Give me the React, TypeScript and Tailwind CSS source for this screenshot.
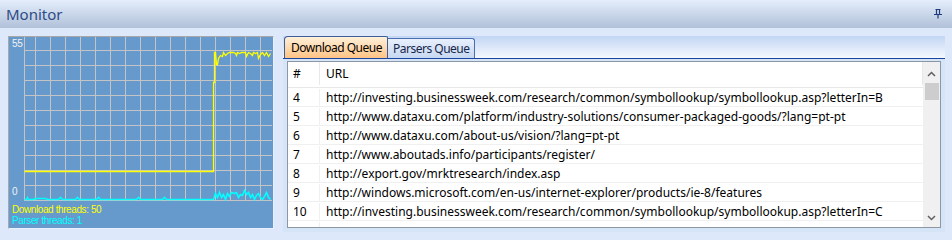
const rows: [string, string][] = [
  ["4", "http://investing.businessweek.com/research/common/symbollookup/symbollookup.asp?letterIn=B"],
  ["5", "http://www.dataxu.com/platform/industry-solutions/consumer-packaged-goods/?lang=pt-pt"],
  ["6", "http://www.dataxu.com/about-us/vision/?lang=pt-pt"],
  ["7", "http://www.aboutads.info/participants/register/"],
  ["8", "http://export.gov/mrktresearch/index.asp"],
  ["9", "http://windows.microsoft.com/en-us/internet-explorer/products/ie-8/features"],
  ["10", "http://investing.businessweek.com/research/common/symbollookup/symbollookup.asp?letterIn=C"],
  ["11", ""],
];

// chart points in page coords, shifted into the svg box (origin 24,37)
const yellowPts = [
  [24, 171], [213, 171], [213, 82], [214, 82], [214, 52], [215, 52], [216, 64], [217, 64],
  [218, 58], [220, 55], [222, 56], [223, 52], [225, 55], [227, 53], [229, 52], [233, 52],
  [235, 53], [236, 55], [237, 52], [239, 53], [241, 52], [245, 52], [246, 56], [248, 52],
  [250, 53], [252, 55], [253, 52], [255, 53], [257, 52], [258, 58], [260, 54], [262, 52],
  [264, 55], [266, 52], [268, 56], [270, 53],
];

const cyanPts = [
  [24, 199], [26, 199], [27, 197], [28, 199], [33, 199], [35, 198], [45, 198], [47, 199],
  [58, 199], [60, 197], [62, 199], [75, 199], [77, 197], [79, 199], [96, 199], [98, 197],
  [100, 199], [136, 199], [138, 197], [140, 199], [162, 199], [164, 197], [166, 199],
  [213, 199], [215, 193], [217, 197], [219, 192], [221, 197], [223, 194], [225, 199],
  [227, 193], [229, 196], [231, 192], [234, 193], [236, 192], [238, 197], [240, 194],
  [242, 195], [244, 190], [246, 194], [248, 192], [250, 197], [252, 194], [254, 199],
  [256, 195], [258, 193], [260, 197], [262, 199], [264, 196], [266, 192], [268, 197], [270, 199],
];

const toPath = (pts: number[][]) =>
  pts.map(([x, y]) => `${x - 24 + 0.5},${y - 37 + 0.5}`).join(" ");

function Chart() {
  const vLines = [0, ...Array.from({ length: 16 }, (_, i) => 11 + i * 15)];
  const hLines = Array.from({ length: 11 }, (_, i) => 13 + i * 15);
  return (
    <svg width="248" height="164" className="block">
      {vLines.map((x) => (
        <line key={"v" + x} x1={x + 0.5} y1={0} x2={x + 0.5} y2={164} stroke="#c4c4c4" strokeWidth="1" />
      ))}
      {hLines.map((y) => (
        <line key={"h" + y} x1={0} y1={y + 0.5} x2={248} y2={y + 0.5} stroke="#c4c4c4" strokeWidth="1" />
      ))}
      <polyline points={toPath(yellowPts)} fill="none" stroke="#ffff00" strokeWidth="1.3" />
      <polyline points={toPath(cyanPts)} fill="none" stroke="#00ffff" strokeWidth="1.6" />
    </svg>
  );
}

function PinIcon() {
  return (
    <svg width="10" height="10" viewBox="0 0 10 10" className="block">
      <path d="M2.5 0.5 H7.5 M3.5 0.5 V5.5 M6.5 0.5 V5.5 M1 5.5 H9 M5 5.5 V9.5" stroke="#1f3c7a" strokeWidth="1.2" fill="none" />
    </svg>
  );
}

function Chevron({ up }: { up?: boolean }) {
  return (
    <svg width="9" height="6" viewBox="0 0 9 6" className="block">
      <path d={up ? "M1 5 L4.5 1.5 L8 5" : "M1 1 L4.5 4.5 L8 1"} stroke="#606060" strokeWidth="1.5" fill="none" />
    </svg>
  );
}

export default function App() {
  return (
    <div className="flex h-[240px] w-[952px] flex-col overflow-hidden bg-[#dde8fa] font-['Noto_Sans',sans-serif]">
      <div className="flex h-[28px] items-center justify-between bg-gradient-to-b from-[#e4eefc] to-[#b1c1d8] pl-[6px] pr-[9px]">
        <span className="text-[15px] leading-none text-[#2d4c85]">Monitor</span>
        <PinIcon />
      </div>

      <div className="flex gap-[9px] pl-[8px] pt-[8px]">
        <div className="flex h-[193px] w-[266px] flex-col border-l border-t border-[#a8a8a8] border-r-[#e9f0fb] border-b-[#e9f0fb] border-r border-b bg-[#6699cc] font-['Liberation_Sans',sans-serif] text-[10px] tracking-[-0.4px]">
          <div className="flex">
            <div className="flex w-[15px] flex-col justify-between pb-[4px] pl-[3px] pt-[1px] leading-[11px] text-[#f2f2f2]">
              <span>55</span>
              <span>0</span>
            </div>
            <Chart />
          </div>
          <div className="pl-[3px] pt-[3px] leading-[11px]">
            <div className="text-[#ffff00]">Download threads: 50</div>
            <div className="text-[#00ffff]">Parser threads: 1</div>
          </div>
        </div>

        <div className="flex h-[196px] w-[662px] flex-col">
          <div className="flex h-[23px] items-end border-b border-[#1a46a0] bg-gradient-to-b from-[#c2d6f4] to-[#f5f8fd] pl-[1px] text-[12px] tracking-[-0.5px]">
            <div className="flex h-[22px] w-[104px] items-center whitespace-nowrap rounded-tl-[4px] rounded-tr-[2px] border border-b-0 border-[#3c5d9c] bg-gradient-to-b from-[#fff0d8] to-[#ffc384] pl-[6px] text-black">
              Download Queue
            </div>
            <div className="flex h-[20px] w-[87px] items-center whitespace-nowrap rounded-tr-[3px] border border-b-0 border-l-0 border-[#4a6fb0] bg-gradient-to-b from-[#e8f0fc] to-[#c7d8f2] pl-[5px] text-[#16264a]">
              Parsers Queue
            </div>
          </div>
          <div className="flex-1 bg-[#d6e4f8] pb-[4px] pl-[4px] pr-[4px] pt-[2px]">
            <div className="flex h-[167px] border border-[#8c96a4] bg-white">
              <div className="flex-1 overflow-hidden text-[12px] text-black">
                <div className="flex h-[26px] items-center border-b border-[#e8e8e8] pb-[2px]">
                  <div className="flex h-full w-[32px] items-center border-r border-[#e8e8e8] pl-[5px]">#</div>
                  <div className="flex h-full flex-1 items-center border-r border-[#e8e8e8] pl-[6px]">URL</div>
                </div>
                {rows.map(([n, url]) => (
                  <div key={n} className="flex h-[19px] items-center border-b border-[#f0f0f0] pt-[1px]">
                    <div className="flex h-full w-[32px] items-center border-r border-[#f0f0f0] pl-[5px]">{url ? n : ""}</div>
                    <div className="whitespace-nowrap pl-[6px]">{url}</div>
                  </div>
                ))}
              </div>
              <div className="flex w-[17px] flex-col items-center bg-[#f0f0f0]">
                <div className="flex h-[21px] items-center justify-center pt-[2px]">
                  <Chevron up />
                </div>
                <div className="h-[17px] w-[14px] bg-[#cdcdcd]" />
                <div className="flex-1" />
                <div className="flex h-[19px] items-center justify-center">
                  <Chevron />
                </div>
              </div>
            </div>
          </div>
        </div>
      </div>
    </div>
  );
}
